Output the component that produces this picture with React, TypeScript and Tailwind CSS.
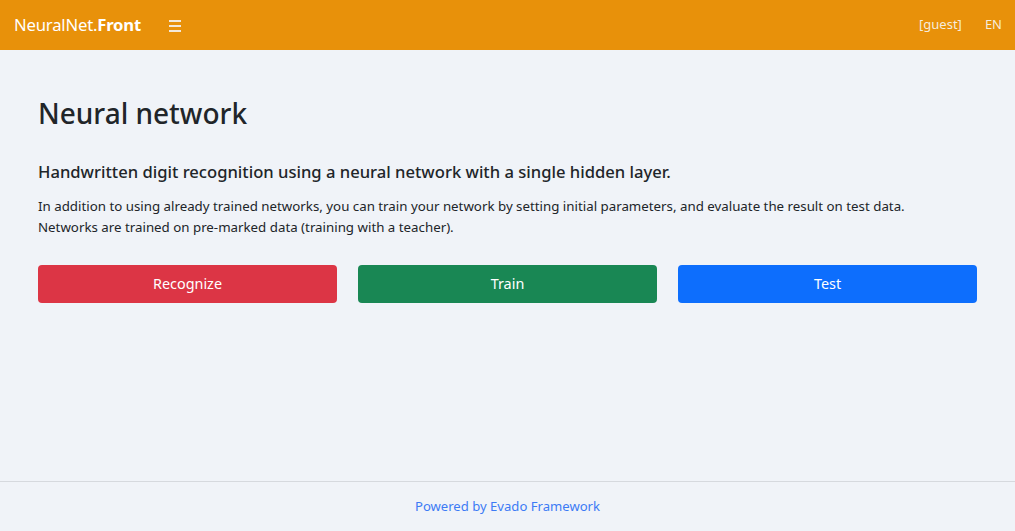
const buttons = [
  { label: 'Recognize', cls: 'bg-[#dc3545]' },
  { label: 'Train', cls: 'bg-[#198754]' },
  { label: 'Test', cls: 'bg-[#0d6efd]' },
];

const App = () => {
  return (
    <div
      className="min-h-[531px] flex flex-col bg-[#f0f3f8] text-[#212529]"
      style={{ fontFamily: '"Noto Sans", "Open Sans", sans-serif' }}
    >
      <header className="h-[50px] bg-[#e8910a] flex items-center px-[14px] text-white">
        <div className="text-[16.7px] tracking-[-0.2px]">
          NeuralNet.<span className="font-bold">Front</span>
        </div>
        <button className="ml-[28px] text-[#f3e8d8] flex flex-col gap-[3px] w-[12px] mt-[1px]">
          <span className="block h-[2px] bg-current" />
          <span className="block h-[2px] bg-current" />
          <span className="block h-[2px] bg-current" />
        </button>
        <div className="ml-auto flex items-center gap-[23px] text-[13px] text-[#f6ecdc]">
          <span>[guest]</span>
          <span className="mr-[-1px]">EN</span>
        </div>
      </header>

      <main className="flex-1 px-[38px] pt-[47px]">
        <h1 className="text-[28px] font-medium leading-[1.2] mb-[31px]">Neural network</h1>
        <h5 className="text-[16.6px] font-medium leading-[1.2] mb-[14px]">
          Handwritten digit recognition using a neural network with a single hidden layer.
        </h5>
        <p className="text-[13.3px] leading-[21px]">
          In addition to using already trained networks, you can train your network by setting
          initial parameters, and evaluate the result on test data.
          <br />
          Networks are trained on pre-marked data (training with a teacher).
        </p>
        <div className="grid grid-cols-3 gap-[21px] mt-[27px]">
          {buttons.map((b) => (
            <button
              key={b.label}
              className={`${b.cls} h-[38px] rounded-[4px] text-white text-[14.4px]`}
            >
              {b.label}
            </button>
          ))}
        </div>
      </main>

      <footer className="h-[50px] border-t border-[#d6d9de] flex items-center justify-center text-[13.1px]">
        <a className="text-[#3d7bf5]">Powered by Evado Framework</a>
      </footer>
    </div>
  );
};

export default App;
